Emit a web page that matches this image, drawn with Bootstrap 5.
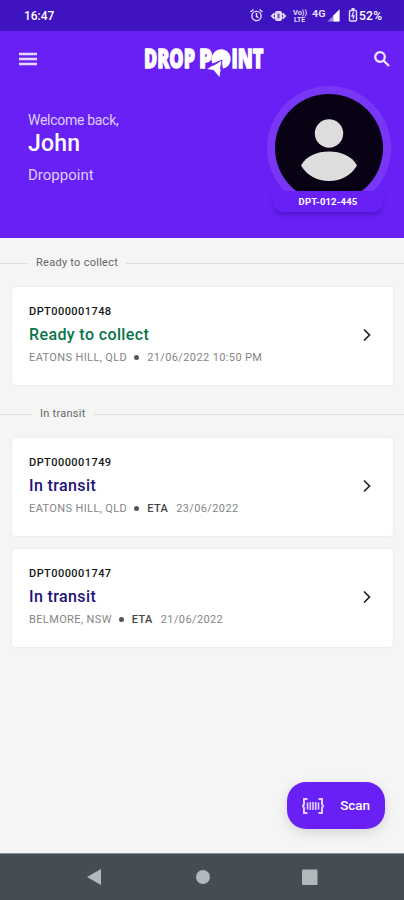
<!DOCTYPE html>
<html lang="en">
<head>
<meta charset="utf-8">
<meta name="viewport" content="width=device-width, initial-scale=1">
<title>Drop Point</title>
<link href="https://cdn.jsdelivr.net/npm/bootstrap@5.3.0/dist/css/bootstrap.min.css" rel="stylesheet">
<style>
body{font-family:Roboto,"Liberation Sans",sans-serif;background:#f5f5f5;color:#222;height:900px;overflow:hidden}
svg{display:block;flex:none}
.status{height:31px;background:#3f14c0;color:#fff;padding:1px 22px 0 24px;font-size:12px;font-weight:500}
.status .clock{letter-spacing:-.05px}
.hero{height:207px;background:#6820f5;color:#fff}
.appbar{height:55px;padding:0 13px 0 19px}
.wordmark{overflow:visible}
.profile{padding:0 13px 0 28px}
.welcome{font-size:14px;line-height:18px;margin-top:25px;color:#ddcffd;letter-spacing:-.29px}
.person{font-size:23px;line-height:28px;font-weight:500;letter-spacing:.2px;margin-top:1px}
.org{font-size:15px;line-height:20px;margin-top:7px;color:#ddcffd;letter-spacing:0}
.avatar-wrap{width:124px;height:126px}
.avatar-ring{width:124px;height:124px;background:#7837f6;clip-path:inset(0 0 19px 0)}
.tag{left:6px;top:105px;width:110px;height:21px;background:#6820f5;border-radius:3px 3px 10px 10px;box-shadow:0 4px 5px -1px #5215cd;font-size:9.5px;line-height:21px;font-weight:700;letter-spacing:.15px}
.divider{height:16px;font-size:11px;line-height:16px;color:#666;letter-spacing:.27px}
.divider::before,.divider::after{content:"";height:1px;background:#dedede}
.divider::before{width:28px;margin-right:8px}
.divider::after{flex:1;margin-left:8px}
.divider.ready-head{margin:17px 0 16px}
.divider.transit-head{margin:21px 0 16px}
.divider.transit-head::before{width:32px}
.parcel{height:98px;margin:0 11px 0 12px;padding:0 19px 3px 17px;border:0;border-radius:4px;box-shadow:0 0 2px #ddd}
.parcel+.parcel{margin-top:13px}
.code{font-size:11px;line-height:14px;font-weight:500;letter-spacing:.45px;color:#161616}
.state{font-size:16px;line-height:20px;font-weight:500;margin-top:6px;letter-spacing:.38px;color:#211278}
.state.ready{color:#087449}
.meta{font-size:11px;line-height:14px;margin-top:6px;color:#858585;letter-spacing:.38px;white-space:nowrap}
.dot{width:5px;height:5px;background:#555;margin:0 8px 0 7px}
.eta{color:#444;font-weight:500;margin-right:8px}
.scan{width:98px;height:47px;right:19px;bottom:71px;background:#6820f5;color:#fff;border-radius:19px;font-size:13.5px;font-weight:500;letter-spacing:-.1px;box-shadow:0 4px 12px #0002}
.scan:hover{background:#6820f5;color:#fff}
.keys{height:47px;background:#454d52;border-top:1px solid #8b8f92}
</style>
<script src="https://cdn.jsdelivr.net/npm/bootstrap@5.3.0/dist/js/bootstrap.bundle.min.js"></script>
</head>
<body class="d-flex flex-column position-relative">
<div class="status d-flex align-items-center justify-content-between">
  <span class="clock">16:47</span>
  <svg width="134" height="22" viewBox="248 5 134 22" fill="none" stroke="#e6dcff">
    <g stroke-width="1.4"><circle cx="256.500" cy="16" r="4.600"/><path d="M256.500 13v3.500l2 1.200M250.500 12l3-2.500M262.500 12l-3-2.500"/></g>
    <path d="M274.500 13.500L272 16l2.500 2.500M282.500 13.500L285 16l-2.500 2.500" stroke-width="2"/><rect x="275.500" y="11.500" width="6" height="9" rx="1" fill="#e6dcff"/><path d="M278.500 13.500v5" stroke="#6848cd" stroke-width="2"/>
    <g fill="#e6dcff" stroke="none" font-family="Roboto" font-weight="700"><text x="293" y="14.500" font-size="6.500" textLength="14" lengthAdjust="spacingAndGlyphs">Vo))</text><text x="294" y="21.500" font-size="7" textLength="11" lengthAdjust="spacingAndGlyphs">LTE</text><text x="312" y="16.500" font-size="9.500" textLength="13.500" lengthAdjust="spacingAndGlyphs">4G</text></g>
    <path d="M339.500 9.500v12h-12z" fill="#9d86df" stroke="none"/><path d="M339.500 9.500v12h-6v-6z" fill="#fff" stroke="none"/>
    <rect x="349.500" y="10.500" width="7" height="10.500" rx="1" stroke-width="1.400"/><path d="M351.500 9h3" stroke-width="2"/><path d="M353.500 12l-1.500 4h2l-1 3" stroke-width="1.300"/>
    <text x="359" y="20" fill="#fff" stroke="none" font-family="Roboto" font-size="12" font-weight="500" textLength="23">52%</text>
  </svg>
</div>
<header class="hero">
  <div class="appbar d-flex align-items-center justify-content-between">
    <svg width="18" height="14" viewBox="0 0 18 14" stroke="#e6d9ff" stroke-width="2.400"><path d="M0 2h18M0 7h18M0 12h18"/></svg>
    <svg class="wordmark" width="130" height="42" viewBox="139.500 38 130 42" fill="#fff">
      <g font-family="Open Sans" font-size="26" font-weight="800" stroke="#fff" stroke-width="1.300"><text x="143.500" y="68" textLength="51" lengthAdjust="spacingAndGlyphs">DROP</text><text x="198.500" y="68" textLength="13" lengthAdjust="spacingAndGlyphs">P</text><text x="231" y="68" textLength="32" lengthAdjust="spacingAndGlyphs">INT</text></g>
      <path d="M212 63.500a9.700 9.700 0 1 1 10.500 5l-1.500-8.500z"/><path d="M221.500 60l-15 9 6.500 1 6 7 1-7 2-10z"/><path d="M221.500 60l-9 5.500M221.500 60l-1.500 9" stroke="#6820f5" stroke-width="1"/>
    </svg>
    <svg width="18" height="18" viewBox="0 0 18 18" fill="none" stroke="#efe7ff" stroke-width="2.300"><circle cx="7" cy="7" r="4.800"/><path d="M10.500 10.500l5.500 5.500"/></svg>
  </div>
  <div class="profile d-flex justify-content-between">
    <div>
      <div class="welcome">Welcome back,</div>
      <div class="person">John</div>
      <div class="org">Droppoint</div>
    </div>
    <div class="avatar-wrap position-relative">
      <div class="avatar-ring rounded-circle">
        <svg width="124" height="124" viewBox="0 0 124 124"><circle cx="62" cy="62" r="54" fill="#080214"/><circle cx="62" cy="47.500" r="14.200" fill="#dedede"/><path d="M34 79.500c5-9.500 16-14 28-14s23 4.500 28 14C84 89.500 74 95 62 95s-22-5.500-28-15.500z" fill="#dedede"/></svg>
      </div>
      <div class="tag position-absolute text-center">DPT-012-445</div>
    </div>
  </div>
</header>
<main class="flex-grow-1">
  <div class="divider ready-head d-flex align-items-center">Ready to collect</div>
  <article class="parcel card flex-row align-items-center justify-content-between">
    <div><div class="code">DPT000001748</div><div class="state ready">Ready to collect</div><div class="meta d-flex align-items-center">EATONS HILL, QLD<i class="dot rounded-circle"></i>21/06/2022 10:50 PM</div></div>
    <svg width="14" height="14" viewBox="0 0 14 14" fill="none" stroke="#222" stroke-width="1.700"><path d="M4 1.500L9.500 7 4 12.500"/></svg>
  </article>
  <div class="divider transit-head d-flex align-items-center">In transit</div>
  <article class="parcel card flex-row align-items-center justify-content-between">
    <div><div class="code">DPT000001749</div><div class="state">In transit</div><div class="meta d-flex align-items-center">EATONS HILL, QLD<i class="dot rounded-circle"></i><span class="eta">ETA</span>23/06/2022</div></div>
    <svg width="14" height="14" viewBox="0 0 14 14" fill="none" stroke="#222" stroke-width="1.700"><path d="M4 1.500L9.500 7 4 12.500"/></svg>
  </article>
  <article class="parcel card flex-row align-items-center justify-content-between">
    <div><div class="code">DPT000001747</div><div class="state">In transit</div><div class="meta d-flex align-items-center">BELMORE, NSW<i class="dot rounded-circle"></i><span class="eta">ETA</span>21/06/2022</div></div>
    <svg width="14" height="14" viewBox="0 0 14 14" fill="none" stroke="#222" stroke-width="1.700"><path d="M4 1.500L9.500 7 4 12.500"/></svg>
  </article>
</main>
<button class="scan btn border-0 position-absolute d-flex align-items-center justify-content-center p-0">
  <svg class="me-2" width="22" height="16" viewBox="0 0 22 16" fill="none" stroke="#e0d0ff" stroke-width="2"><path d="M5.500 1H2v5L1 8l1 2v5h3.500M16.500 1H20v5l1 2-1 2v5h-3.500"/><path d="M5.500 4.500v7M8.300 4v8M11 4v8M13.700 4v8M16.500 4.500v7" stroke-width="1.600"/></svg>
  <span class="ms-1 ps-1">Scan</span>
</button>
<footer class="keys">
  <svg width="404" height="46" viewBox="0 854 404 46" fill="#b0b9bc"><path d="M87 877l14-8v16z"/><circle cx="203" cy="877" r="7"/><rect x="302" y="869.500" width="15.500" height="15.500" rx="1"/></svg>
</footer>
</body>
</html>
